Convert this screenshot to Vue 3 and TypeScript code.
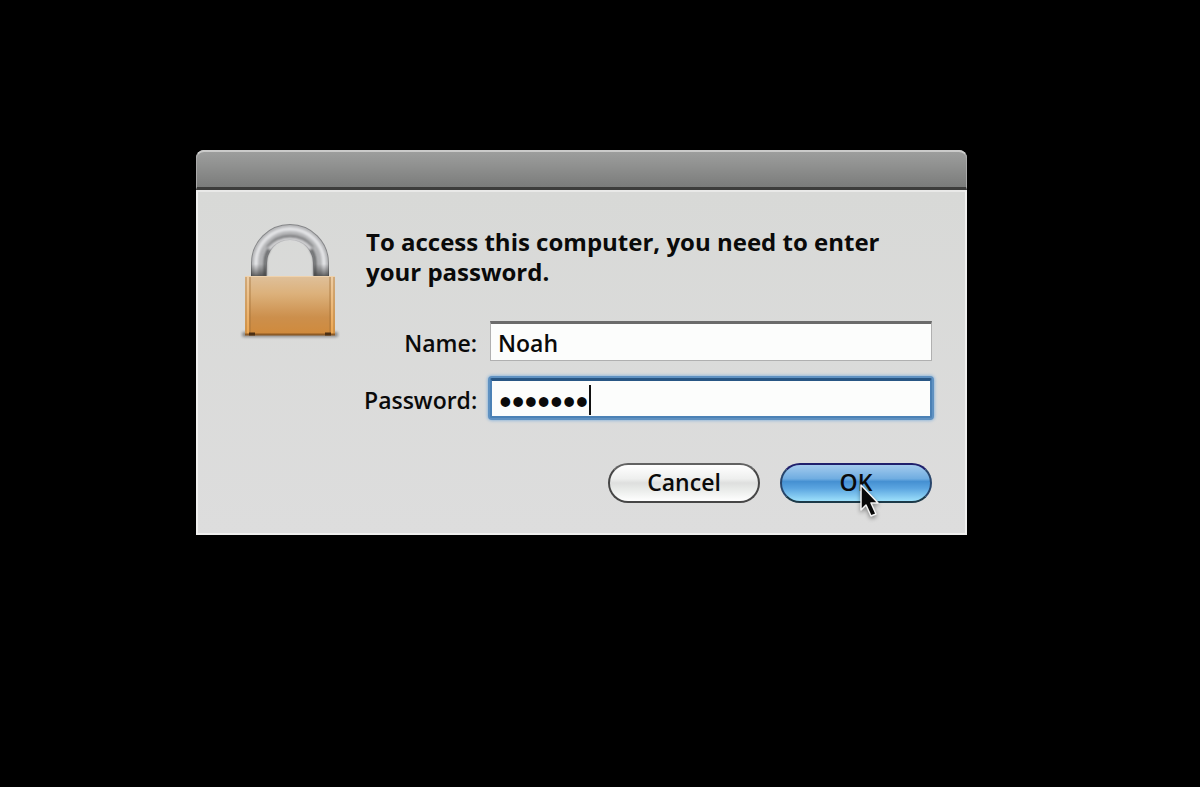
<script setup lang="ts">
import { ref } from 'vue'

const userName = ref<string>('Noah')
const password = ref<string>('letmein')
</script>

<template>
  <main class="screen">
    <section class="dialog" role="dialog" aria-labelledby="prompt">
      <header class="titlebar"></header>
      <form class="content" @submit.prevent>
        <svg class="lock" viewBox="0 0 100 120" width="100" height="120" aria-hidden="true">
          <defs>
            <linearGradient id="body" x1="0" y1="0" x2="0" y2="1">
              <stop offset="0" stop-color="#dfc09a" />
              <stop offset="0.3" stop-color="#dcb17b" />
              <stop offset="0.7" stop-color="#cc8f4c" />
              <stop offset="1" stop-color="#d08a3b" />
            </linearGradient>
            <linearGradient id="edge" x1="0" y1="0" x2="0" y2="1">
              <stop offset="0" stop-color="#edcda5" />
              <stop offset="1" stop-color="#eda54e" />
            </linearGradient>
            <linearGradient id="foot" x1="0" y1="0" x2="0" y2="1">
              <stop offset="0" stop-color="#333" stop-opacity="0" />
              <stop offset="1" stop-color="#333" stop-opacity="0.85" />
            </linearGradient>
            <filter id="soft" x="-20%" y="-100%" width="140%" height="300%">
              <feGaussianBlur stdDeviation="1.5" />
            </filter>
            <filter id="sheen" x="-20%" y="-20%" width="140%" height="140%">
              <feGaussianBlur stdDeviation="0.8" />
            </filter>
          </defs>
          <rect x="2" y="112" width="96" height="5" rx="2" fill="#888" filter="url(#soft)" />
          <path d="M19 58V43a31 31 0 0 1 62 0v15" fill="none" stroke="#858688" stroke-width="16" />
          <path d="M19 58V43a31 31 0 0 1 62 0v15" fill="none" stroke="#b4b5b7" stroke-width="14" />
          <g fill="none" filter="url(#sheen)">
            <path d="M16 56V43a34 34 0 0 1 68 0v13" stroke="#e3e4e6" stroke-width="4" />
            <path d="M25 56V43a25 25 0 0 1 50 0v13" stroke="#68696b" stroke-width="3" />
            <path d="M27 27a29 29 0 0 1 46 0" stroke="#808183" stroke-width="2" />
            <path d="M29 29a27 27 0 0 1 42 0" stroke="#d8d8da" stroke-width="3" />
          </g>
          <path d="M11 44h15v14H11zM74 44h15v14H74z" fill="url(#foot)" />
          <rect x="5" y="56" width="90" height="59" rx="1" fill="url(#edge)" />
          <rect x="9" y="56" width="82" height="59" fill="url(#body)" />
          <path d="M6 57v57M10 57v57M90 57v57M94 57v57" stroke="#a27137" stroke-width="1" opacity="0.75" />
          <path d="M5 56.500h90" stroke="#efd2ad" stroke-width="1" />
          <path d="M5 114.500h90" stroke="#8d5b25" stroke-width="2" />
          <path d="M9 114h6M85 114h6" stroke="#4b2f13" stroke-width="3" />
        </svg>

        <div class="main">
          <h1 id="prompt" class="prompt">To access this computer, you need to enter your password.</h1>

          <div class="fields">
            <label for="name">Name:</label>
            <input id="name" v-model="userName" class="field" type="text" autocomplete="off" />
            <label for="password">Password:</label>
            <div class="secure">
              <input id="password" v-model="password" class="field focused" type="password" autocomplete="off" />
              <span class="caret" aria-hidden="true"></span>
            </div>
          </div>

          <div class="actions">
            <button class="button" type="button">Cancel</button>
            <button class="button primary" type="submit">
              OK
              <svg class="pointer" viewBox="0 0 22 36" width="22" height="36" aria-hidden="true">
                <path d="M2 2v25l5-5 5 11 5-2-5-11h7z" fill="#080808" stroke="#f4f4f4" stroke-width="1.500" stroke-linejoin="round" />
              </svg>
            </button>
          </div>
        </div>
      </form>
    </section>
  </main>
</template>

<style>
body {
  background: #000;
}
</style>

<style scoped>
.screen {
  display: grid;
  grid-template-columns: 196fr 771fr 233fr;
  min-height: 100vh;
  box-sizing: border-box;
  padding-top: 150px;
  align-items: start;
  background: #000;
  color: #0a0a0a;
  font-family: "Open Sans", "Noto Sans", sans-serif;
}

.dialog {
  grid-column: 2;
  box-sizing: border-box;
  overflow: hidden;
  border-radius: 8px 8px 0 0;
  background: #dadbda;
}

.titlebar {
  height: 40px;
  box-sizing: border-box;
  border: 1px solid #aaa;
  border-top: 2px solid #cbcbca;
  border-bottom: 3px solid #3d3d3c;
  border-radius: 8px 8px 0 0;
  background: linear-gradient(#9d9e9d, #7b7c7b);
}

.content {
  display: flex;
  gap: 24px;
  padding: 28px 33px 30px 42px;
  border: 2px solid #f0f0ef;
  border-top-color: #e9e9e8;
  background: linear-gradient(#d8d9d7, #dddddd);
}

.lock {
  flex: none;
}

.main {
  flex: 1;
  min-width: 0;
}

.prompt {
  margin: 7px 0 0;
  padding-left: 2px;
  font-size: 24px;
  font-weight: 700;
  line-height: 30px;
}

.fields {
  display: grid;
  grid-template-columns: 113px 1fr;
  gap: 17px 13px;
  align-items: center;
  margin-top: 34px;
  font-size: 23px;
  font-weight: 600;
}

.fields label {
  padding-top: 4px;
  text-align: right;
  white-space: nowrap;
  line-height: 36px;
}

.field {
  display: block;
  width: 100%;
  height: 40px;
  box-sizing: border-box;
  margin: 0;
  padding: 2px 7px 0;
  border: 1px solid #b0b0b0;
  border-top: 3px solid #6b6b6b;
  border-radius: 0;
  outline: none;
  background: #fcfdfc;
  color: inherit;
  font: inherit;
  caret-color: transparent;
}

.focused {
  padding-top: 4px;
  border: 2px solid #4b81b5;
  border-top: 3px solid #285684;
  border-radius: 2px;
  box-shadow: 0 0 0 2px #5f91c1, 0 0 3px 3px #98bbdb;
  font: 700 22px Lato, "Open Sans", sans-serif;
}

.secure {
  position: relative;
}

.caret {
  position: absolute;
  left: 99px;
  top: 7px;
  width: 2px;
  height: 30px;
  background: #111;
}

.actions {
  display: flex;
  justify-content: flex-end;
  gap: 20px;
  margin-top: 45px;
}

.button {
  position: relative;
  width: 152px;
  height: 40px;
  box-sizing: border-box;
  padding: 0 0 2px;
  border: 2px solid #464646;
  border-top-color: #626262;
  border-radius: 20px;
  background: linear-gradient(#ffffff 0%, #eeefee 38%, #dedfde 50%, #e7e9e7 65%, #ffffff 100%);
  color: inherit;
  font: 600 23px "Open Sans", "Noto Sans", sans-serif;
}

.primary {
  border-color: #20206c #28456b #1c3948;
  background: linear-gradient(#a3cbee 0%, #70ade1 38%, #4590d2 46%, #5ba5e0 65%, #9de0fb 100%);
}

.pointer {
  position: absolute;
  left: 77px;
  top: 18px;
  filter: drop-shadow(0 2px 2px #00000066);
}
</style>
